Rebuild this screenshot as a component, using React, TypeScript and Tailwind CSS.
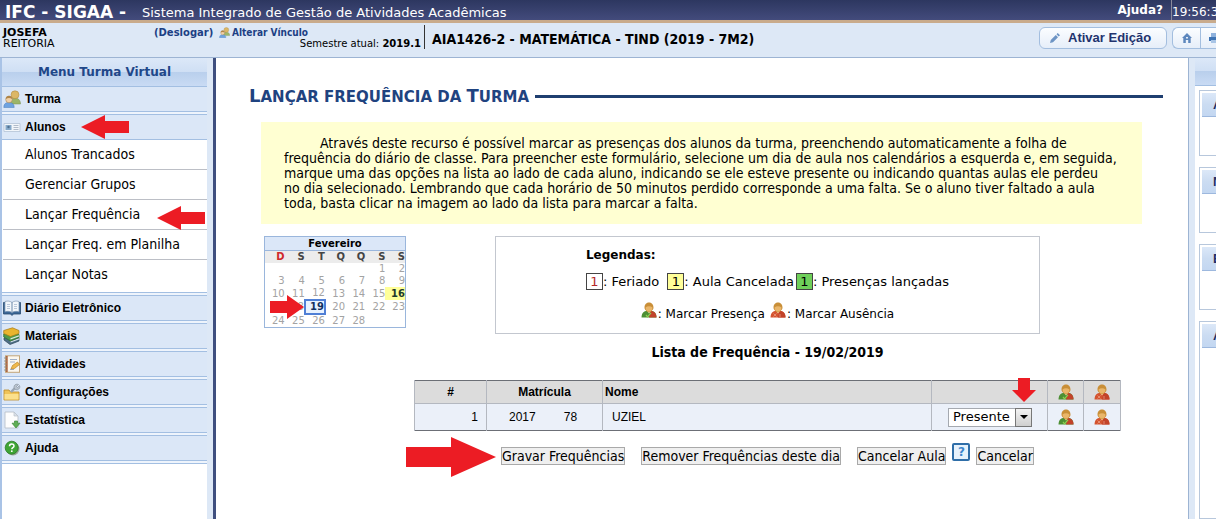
import type { ReactNode } from 'react';

const verdana = "font-['DejaVu_Sans',Verdana,sans-serif]";
const condensed = "font-['DejaVu_Sans_Condensed','DejaVu_Sans',sans-serif]";
const arial = "font-['Liberation_Sans',Arial,sans-serif]";
const barGradient = 'bg-linear-to-b from-[#dce8f8] from-0% via-[#cbdcf2] via-50% to-[#c3d7f1]';
const panelGradient = 'bg-[linear-gradient(#dce8f8,#cfdff4_50%,#b9cfec_50%,#c9dbf4)]';

/* ---------- icons ---------- */

function PeopleIcon({ className }: { className?: string }) {
  return (
    <svg viewBox="0 0 18 18" className={className} aria-hidden="true">
      <path d="M7 14c0-4 1-6 4.500-6s6 2 6 6z" fill="#9cb568" stroke="#7a9350" strokeWidth=".5" />
      <circle cx="12" cy="4.800" r="4" fill="#dcb766" stroke="#a8843a" strokeWidth=".5" />
      <path d="M.8 17.500c0-3.500 1.500-5 5-5s5.400 1.500 5.400 5z" fill="#6fa3e0" stroke="#4a7cba" strokeWidth=".5" />
      <circle cx="6" cy="9.500" r="3.300" fill="#f0cfa6" stroke="#9a7a4a" strokeWidth=".5" />
      <path d="M2.800 9c0-4.200 6.400-4.200 6.400 0-2-1.200-4.400-1.200-6.400 0z" fill="#b08548" />
    </svg>
  );
}

function CardIcon() {
  return (
    <svg viewBox="0 0 18 18" className="size-[18px]" aria-hidden="true">
      <path d="M1 5.500h16v8H1z" fill="#f2f6fa" stroke="#b4c3d6" strokeWidth=".8" />
      <path d="M2.500 7h6v5h-6z" fill="#86a9c9" />
      <circle cx="5.500" cy="9" r="1.200" fill="#4f7090" />
      <path d="M10.500 7.500h5M10.500 9.500h5M10.500 11.500h5" stroke="#a8b4c4" strokeWidth=".9" />
    </svg>
  );
}

function BookIcon() {
  return (
    <svg viewBox="0 0 18 18" className="size-[18px]" aria-hidden="true">
      <path d="M.5 3.500h17V15h-7l-1.500 1.500L7.500 15h-7z" fill="#3c6796" stroke="#27496f" strokeWidth=".8" />
      <path d="M2 2.500c3-.8 5-.5 7 1v10c-2-1.200-4-1.500-7-.8zM16 2.500c-3-.8-5-.5-7 1v10c2-1.200 4-1.500 7-.8z" fill="#f3f7fb" stroke="#7f98b5" strokeWidth=".7" />
      <path d="M4 5.500h3M4 7.500h3M4 9.500h3M11 5.500h3M11 7.500h3M11 9.500h3" stroke="#a9bad0" strokeWidth=".8" />
    </svg>
  );
}

function BooksIcon() {
  return (
    <svg viewBox="0 0 18 18" className="size-[18px]" aria-hidden="true">
      <path d="M1 11l9-2.500 6 2V14l-9 3.500L1 13z" fill="#4d6e86" stroke="#2c4557" strokeWidth=".7" />
      <path d="M7.500 14.200l8.500-3v1.300l-8.500 3z" fill="#d7e2ea" />
      <path d="M.7 7l9.300-2 6 2.500v3L7.500 14 .7 10z" fill="#4f9a4a" stroke="#2d6b2c" strokeWidth=".7" />
      <path d="M7.500 11.200l8.500-3v1.300l-8.500 3z" fill="#dfe8e0" />
      <path d="M.7 3.500L9.500.8 16 3.500v3L7.500 9.500.7 6.500z" fill="#e9b52e" stroke="#a87a16" strokeWidth=".7" />
    </svg>
  );
}

function NotebookIcon() {
  return (
    <svg viewBox="0 0 18 18" className="size-[18px]" aria-hidden="true">
      <rect x="2.500" y=".8" width="14" height="16.500" fill="#fbf7ee" stroke="#c2a67a" />
      <path d="M3.800 1v16" stroke="#b0653c" strokeWidth="1.800" />
      <path d="M1 3h3M1 6h3M1 9h3M1 12h3M1 15h3" stroke="#888" strokeWidth=".8" />
      <path d="M7 4.500h7M7 7h5M7 14.500h4" stroke="#9fb0c8" strokeWidth="1.200" />
      <path d="M8 14l1.500-3.500 5-3.500 2 2.500-5 4z" fill="#f0b94a" stroke="#b88428" strokeWidth=".7" />
    </svg>
  );
}

function FolderIcon() {
  return (
    <svg viewBox="0 0 18 18" className="size-[18px]" aria-hidden="true">
      <path d="M1 7h5l1.500 2H16v8H1z" fill="#f0c458" stroke="#bb8a26" strokeWidth=".8" />
      <path d="M1.500 11h14v5.500h-14z" fill="#fbe08c" />
      <path d="M8 9l4-4" stroke="#9aa7b5" strokeWidth="2.400" />
      <path d="M15.500 1.500l-2 2 1 1 2-2c1 2-.5 4.500-3 4.200-2-.2-3-2-2.300-3.800.7-1.600 2.500-2.200 4.300-1.400z" fill="#b9c3ce" stroke="#7f8b98" strokeWidth=".6" />
    </svg>
  );
}

function ReportIcon() {
  return (
    <svg viewBox="0 0 18 18" className="size-[18px]" aria-hidden="true">
      <path d="M2 1h9l4 4v12H2z" fill="#fdfdfd" stroke="#b9c1cb" strokeWidth=".9" />
      <path d="M11 1v4h4z" fill="#dbe1e8" stroke="#b9c1cb" strokeWidth=".7" />
      <path d="M11.500 10h3v2.200H17L13 17l-4-4.800h2.500z" fill="#5fae54" stroke="#3f8a3a" strokeWidth=".7" />
    </svg>
  );
}

function HelpIcon() {
  return (
    <svg viewBox="0 0 18 18" className="size-[18px]" aria-hidden="true">
      <circle cx="10" cy="10" r="6.500" fill="#9aa59a" />
      <circle cx="8.700" cy="8.700" r="6.500" fill="#3fa535" stroke="#2a7a25" strokeWidth=".8" />
      <path d="M6.500 7.200c0-3 4.500-3 4.500-.3 0 1.700-2.200 1.700-2.200 3.300" fill="none" stroke="#fff" strokeWidth="1.500" />
      <circle cx="8.800" cy="12.200" r=".9" fill="#fff" />
    </svg>
  );
}

function StudentIcon({ absent, label }: { absent?: boolean; label: string }) {
  return (
    <svg viewBox="0 0 16 16" className="size-4" role="img" aria-label={label}>
      <path d="M.5 15.500C.5 11 3 8.500 8 8.500s7.500 2.500 7.500 7z" fill={absent ? '#d4532f' : '#4d8f34'} />
      <path d="M9.500 8.700c4 .5 6 2.800 6 6.800H8z" fill="#c2432a" />
      <path d="M6 9l2 2.500L10 9z" fill="#ecc98e" />
      <path d="M3.500 5.500C3.500-1.300 12.500-1.300 12.500 5.500c0 2-1 2.300-1.500 3-1.500 2-4.500 2-6 0-.5-.7-1.500-1-1.500-3z" fill="#c98f38" />
      <path d="M4.500 5.500c2-1.800 5-1.800 7 0C11.500 11 4.500 11 4.500 5.500z" fill="#eab66a" />
      {absent ? (
        <path d="M3.500 11.500l3 3M6.500 11.500l-3 3M10 12v3" stroke="#eea58c" strokeWidth=".7" />
      ) : (
        <path d="M5 13l1.500 1.800 3.500-4" fill="none" stroke="#8ed052" strokeWidth="1.200" />
      )}
    </svg>
  );
}

function ArrowH({ className, flip }: { className: string; flip?: boolean }) {
  return (
    <svg viewBox="0 0 48 24" preserveAspectRatio="none" className={`pointer-events-none absolute z-10 ${className}`} aria-hidden="true">
      <path d={flip ? 'M48 6H24V0L0 12l24 12v-6h24z' : 'M0 6h24V0l24 12-24 12v-6H0z'} fill="#ec1c24" />
    </svg>
  );
}

/* ---------- data ---------- */

type MenuEntry = { label: string; icon: ReactNode; marked?: boolean; children?: { label: string; marked?: boolean }[] };

const menu: MenuEntry[] = [
  { label: 'Turma', icon: <PeopleIcon className="size-[18px]" /> },
  {
    label: 'Alunos',
    icon: <CardIcon />,
    marked: true,
    children: [
      { label: 'Alunos Trancados' },
      { label: 'Gerenciar Grupos' },
      { label: 'Lançar Frequência', marked: true },
      { label: 'Lançar Freq. em Planilha' },
      { label: 'Lançar Notas' },
    ],
  },
  { label: 'Diário Eletrônico', icon: <BookIcon /> },
  { label: 'Materiais', icon: <BooksIcon /> },
  { label: 'Atividades', icon: <NotebookIcon /> },
  { label: 'Configurações', icon: <FolderIcon /> },
  { label: 'Estatística', icon: <ReportIcon /> },
  { label: 'Ajuda', icon: <HelpIcon /> },
];

const weekDays = ['D', 'S', 'T', 'Q', 'Q', 'S', 'S'];

const weeks = [
  ['', '', '', '', '', '1', '2'],
  ['3', '4', '5', '6', '7', '8', '9'],
  ['10', '11', '12', '13', '14', '15', '16'],
  ['17', '18', '19', '20', '21', '22', '23'],
  ['24', '25', '26', '27', '28', '', ''],
];

const panels = [
  { title: 'A', size: 'h-[66px]' },
  { title: 'N', size: 'h-[66px]' },
  { title: 'E', size: 'h-[66px]' },
  { title: 'A', size: 'flex-1' },
];

/* ---------- page parts ---------- */

function TopBar() {
  return (
    <header className="flex h-[23px] shrink-0 items-center overflow-hidden border-b-3 border-[#c9ab8c] bg-linear-to-b from-[#2d3760] to-[#434b7c] pl-[5px] text-white">
      <span className="w-[137px] pt-1 text-[17px] leading-5 font-bold whitespace-nowrap">IFC - SIGAA -</span>
      <span className="flex-1 pt-1.5 text-[13px] leading-4 whitespace-nowrap">
        Sistema Integrado de Gestão de Atividades Acadêmicas
      </span>
      <a href="#ajuda" className="text-[12px] leading-4 font-bold">Ajuda?</a>
      <span className="ml-2 w-[45px] shrink-0 overflow-hidden border-l border-[#8a8a9a] pt-1 text-[12px] leading-4 whitespace-nowrap">
        19:56:3
      </span>
    </header>
  );
}

function InfoBar() {
  return (
    <div className="flex h-[35px] shrink-0 border-b border-[#9db4d3] bg-[#dde8f6]">
      <div className="w-[421px] shrink-0 pt-1 pl-[3px] text-[11px] leading-[11px] whitespace-nowrap">
        <div className="flex">
          <strong className="w-[151px]">JOSEFA</strong>
          <a href="#sair" className="w-[65px] text-[10px] font-bold text-[#1c3f84]">(Deslogar)</a>
          <a href="#vinculo" className={`flex gap-0.5 text-[10px] font-bold text-[#1c3f84] ${condensed}`}>
            <PeopleIcon className="size-[11px]" />
            Alterar Vínculo
          </a>
        </div>
        <div className="flex justify-between">
          <span>REITORIA</span>
          <span className="text-[10px]">
            Semestre atual: <strong>2019.1</strong>
          </span>
        </div>
      </div>
      <h1 className={`my-0.5 ml-[3px] h-6 flex-1 border-l border-[#333] pl-[7px] text-[14px] leading-7 font-bold whitespace-nowrap ${condensed}`}>
        AIA1426-2 - MATEMÁTICA - TIND (2019 - 7M2)
      </h1>
      <div className={`flex items-center gap-[5px] pb-1 ${arial}`}>
        <button type="button" className="flex h-[22px] w-32 items-center gap-2 rounded-[6px] border border-[#a3bedf] bg-linear-to-b from-[#fbfdff] to-[#e6eef9] pl-2.5 text-[13px] leading-4 font-bold whitespace-nowrap text-[#22336e]">
          <svg viewBox="0 0 10 10" className="size-2.5" aria-hidden="true">
            <path d="M0 10l.8-3 5-5 2.200 2.200-5 5zM6.500 1.300L7.700 0 10 2.300 8.700 3.500z" fill="#6d94c4" />
          </svg>
          Ativar Edição
        </button>
        <div className="flex h-[22px] w-11 overflow-hidden rounded-l-[6px] border border-r-0 border-[#a3bedf] bg-linear-to-b from-[#fbfdff] to-[#e6eef9]">
          <button type="button" aria-label="Início" className="flex w-7 shrink-0 items-center justify-center border-r border-[#a3bedf]">
            <svg viewBox="0 0 10 10" className="size-2.5" aria-hidden="true">
              <path d="M5 0l5 5H8.700v5H6.200V7H3.800v3H1.300V5H0z" fill="#5d87bd" />
              <path d="M4 4h2v1.500H4z" fill="#e6eef9" />
            </svg>
          </button>
          <button type="button" aria-label="Imprimir" className="flex w-7 shrink-0 items-center pl-2">
            <svg viewBox="0 0 12 10" className="h-2.5 w-3" aria-hidden="true">
              <path d="M2 0h8v4H2z" fill="#8fb2dd" />
              <path d="M0 4h12v4H0z" fill="#3f74b4" />
              <path d="M2 7h8v3H2z" fill="#a9c5e6" />
            </svg>
          </button>
        </div>
      </div>
    </div>
  );
}

function Sidebar() {
  return (
    <nav className="w-[213px] shrink-0 bg-[#dde8f6] pr-[6px]">
      <div className="h-full border-l-2 border-[#a9c3e6] bg-white">
        <h2 className={`h-7 text-center text-[12px] leading-7 font-bold text-[#1f4789] ${panelGradient}`}>
          Menu Turma Virtual
        </h2>
        <ul className="border-b border-[#a3bfe2]">
          {menu.map((entry) => (
            <li key={entry.label} className="border-t border-[#a3bfe2] bg-[#eef4fc] pb-0.5">
              <div className="relative border-b border-[#a3bfe2]">
                <button type="button" className={`flex h-6 w-full items-center gap-1 bg-[#dbe7f7] pl-px text-left text-[12px] leading-4 font-bold ${arial}`}>
                  {entry.icon}
                  {entry.label}
                </button>
                {entry.marked && <ArrowH flip className="top-0 left-[79px] h-6 w-12" />}
              </div>
              {entry.children && (
                <ul className={`border-b border-[#a3bfe2] bg-white pb-0.5 pl-px text-[14px] ${condensed}`}>
                  {entry.children.map((child) => (
                    <li key={child.label} className="relative h-[30px] border-b border-[#bcbfc6] pl-[22px] leading-7 last:border-0">
                      <a href="#menu">{child.label}</a>
                      {child.marked && <ArrowH flip className="top-1.5 right-0.5 h-6 w-12" />}
                    </li>
                  ))}
                </ul>
              )}
            </li>
          ))}
        </ul>
      </div>
    </nav>
  );
}

function Calendar() {
  return (
    <div className="relative shrink-0">
      <table className="w-[142px] table-fixed border-collapse border border-[#9ab6dc] text-right text-[10px] leading-3 text-[#a3a3a3]">
        <thead>
          <tr>
            <th colSpan={7} className="h-[14px] border-b border-[#9ab6dc] bg-[#dbe7f8] text-center text-black">Fevereiro</th>
          </tr>
          <tr className="bg-[#ececec] text-[#444]">
            {weekDays.map((day, i) => (
              <th key={i} className={i === 0 ? 'h-3 text-[#cf2a2a]' : 'h-3'}>{day}</th>
            ))}
          </tr>
        </thead>
        <tbody>
          {weeks.map((week, w) => (
            <tr key={w}>
              {week.map((day, d) => (
                <td
                  key={d}
                  className={
                    day === '16'
                      ? 'h-3 bg-[#ffff99] font-bold text-[#1d3a2b]'
                      : day === '19'
                        ? 'h-3 border-2 border-[#4f7fd6] bg-[#e8f2ff] font-bold text-[#12305f]'
                        : 'h-3'
                  }
                >
                  {day}
                </td>
              ))}
            </tr>
          ))}
        </tbody>
      </table>
      <ArrowH className="top-[59px] left-1.5 h-6 w-[34px]" />
    </div>
  );
}

function Swatch({ className }: { className: string }) {
  return <span className={`inline-block w-[17px] border border-[#444] text-center leading-[15px] ${className}`}>1</span>;
}

function Legend() {
  return (
    <section className="mx-auto flex h-[98px] w-[545px] flex-col items-center border border-[#c3c7cf] pt-2.5 text-[12px] leading-4">
      <div>
        <h3 className="font-bold">Legendas:</h3>
        <p className="mt-2.5 flex items-center text-[13px] whitespace-nowrap">
          <Swatch className="text-[#b52a2a]" />: Feriado
          <span className="ml-2" />
          <Swatch className="bg-[#ffff99]" />: Aula Cancelada
          <span className="ml-0.5" />
          <Swatch className="bg-[#6fd05a]" />: Presenças lançadas
        </p>
      </div>
      <p className="mt-3 flex items-end gap-px whitespace-nowrap">
        <span className="pb-1"><StudentIcon label="Presença" /></span>: Marcar Presença
        <span className="pb-1 pl-1"><StudentIcon absent label="Ausência" /></span>: Marcar Ausência
      </p>
    </section>
  );
}

function AttendanceTable() {
  const cell = 'border-x border-[#b4b8c0]';
  return (
    <table className={`mt-5 w-full table-fixed border-collapse border-y border-[#6c6f76] text-[12px] leading-4 ${arial}`}>
      <colgroup>
        <col className="w-[72px]" />
        <col className="w-[116px]" />
        <col />
        <col className="w-[116px]" />
        <col className="w-9" />
        <col className="w-[37px]" />
      </colgroup>
      <thead>
        <tr className="h-[23px] border-b border-[#b4b8c0] bg-[#dcdcdc]">
          <th className={cell}>#</th>
          <th className={cell}>Matrícula</th>
          <th className={`${cell} pl-0.5 text-left`}>Nome</th>
          <th className={`${cell} relative`}>
            <svg viewBox="0 0 24 24" className="pointer-events-none absolute -top-[3px] right-[11px] size-6" aria-hidden="true">
              <path d="M6 0h12v12h6L12 24 0 12h6z" fill="#ec1c24" />
            </svg>
          </th>
          <th className={cell}><div className="flex justify-center"><StudentIcon label="Todos presentes" /></div></th>
          <th className={cell}><div className="flex justify-center"><StudentIcon absent label="Todos ausentes" /></div></th>
        </tr>
      </thead>
      <tbody>
        <tr className="h-[27px] bg-[#ebf0f9]">
          <td className={`${cell} pr-2 text-right`}>1</td>
          <td className={`${cell} pl-[22px]`}>
            <span className="flex gap-7"><span>2017</span><span>78</span></span>
          </td>
          <td className={`${cell} pl-[9px]`}>UZIEL</td>
          <td className={cell}>
            <div className="relative ml-4 w-[84px]">
              <select aria-label="Presença" className={`block h-[19px] w-full appearance-none border border-[#a5a9b0] bg-white pl-1 text-[13px] leading-4 ${verdana}`}>
                <option>Presente</option>
              </select>
              <span className="pointer-events-none absolute inset-y-0 right-0 flex w-[17px] items-center justify-center border border-[#777] bg-linear-to-b from-[#f3f3f3] to-[#cfcfcf]">
                <svg viewBox="0 0 8 4" className="h-1 w-2" aria-hidden="true"><path d="M0 0h8L4 4z" /></svg>
              </span>
            </div>
          </td>
          <td className={cell}><div className="flex justify-center"><StudentIcon label="Marcar presença" /></div></td>
          <td className={cell}><div className="flex justify-center"><StudentIcon absent label="Marcar ausência" /></div></td>
        </tr>
      </tbody>
    </table>
  );
}

function Actions() {
  const button = `h-[18px] border border-[#a9a9a9] bg-[#efefef] text-[14px] leading-4 whitespace-nowrap ${condensed}`;
  return (
    <div className="relative mt-3 flex items-end justify-center">
      <ArrowH className="-top-1.5 -left-2 h-10 w-[90px]" />
      <button type="button" className={button}>Gravar Frequências</button>
      <button type="button" className={`ml-4 ${button}`}>Remover Frequências deste dia</button>
      <button type="button" className={`ml-4 ${button}`}>Cancelar Aula</button>
      <button type="button" aria-label="Ajuda" className="mr-1.5 mb-1 ml-1.5 size-[18px] rounded-[2px] border-2 border-[#2f6ea8] bg-[#e6f2fc] text-[12px] leading-[14px] font-bold text-[#3e86cc]">
        ?
      </button>
      <button type="button" className={button}>Cancelar</button>
    </div>
  );
}

function SidePanels() {
  return (
    <aside className="flex w-[21px] shrink-0 flex-col overflow-hidden bg-white">
      <div className={`h-7 shrink-0 border-b border-[#a3bfe2] ${panelGradient}`} />
      <div className="flex flex-1 flex-col gap-[11px] pt-1 pl-1">
        {panels.map((panel, i) => (
          <section key={i} className={`w-[180px] border border-[#b7c7dc] p-0.5 ${panel.size}`}>
            <h3 className={`h-6 border-b border-[#9db8de] pl-[11px] text-[13px] leading-6 font-bold text-[#1e2f66] ${barGradient} ${arial}`}>
              {panel.title}
            </h3>
          </section>
        ))}
      </div>
    </aside>
  );
}

export default function App() {
  return (
    <div className={`flex min-h-screen flex-col overflow-hidden bg-white text-black ${verdana}`}>
      <TopBar />
      <InfoBar />
      <div className="flex flex-1">
        <Sidebar />
        <main className="min-w-0 flex-1 border-r border-l-3 border-r-[#9db4d3] border-l-[#3f4f7f] pt-[27px]">
          <div className="flex items-center gap-1.5 pr-[25px] pl-[33px] text-[#1f4380]">
            <h2 className="text-[15px] leading-[22px] font-bold whitespace-nowrap uppercase">
              <span className="text-[18px]">L</span>ançar frequência da <span className="text-[18px]">T</span>urma
            </h2>
            <div className="h-[3px] flex-1 bg-[#1f3f70]" />
          </div>

          <p className={`mt-[14px] mr-[46px] ml-[45px] bg-[#ffffd2] pt-[14px] pr-2 pb-[13px] pl-[23px] indent-9 text-[14px] leading-[15px] ${condensed}`}>
            Através deste recurso é possível marcar as presenças dos alunos da turma, preenchendo automaticamente a folha de
            <br />
            frequência do diário de classe. Para preencher este formulário, selecione um dia de aula nos calendários a esquerda e, em seguida,
            <br />
            marque uma das opções na lista ao lado de cada aluno, indicando se ele esteve presente ou indicando quantas aulas ele perdeu
            <br />
            no dia selecionado. Lembrando que cada horário de 50 minutos perdido corresponde a uma falta. Se o aluno tiver faltado a aula
            <br />
            toda, basta clicar na imagem ao lado da lista para marcar a falta.
          </p>

          <div className="mt-3 flex items-start gap-2 pr-[67px] pl-12">
            <Calendar />
            <div className="min-w-0 flex-1">
              <Legend />
              <h3 className={`mt-2.5 text-center text-[14px] leading-4 font-bold ${condensed}`}>Lista de Frequência - 19/02/2019</h3>
              <AttendanceTable />
              <Actions />
            </div>
          </div>
        </main>
        <div className="w-1.5 shrink-0 bg-[#dde8f6]" />
        <SidePanels />
      </div>
    </div>
  );
}
